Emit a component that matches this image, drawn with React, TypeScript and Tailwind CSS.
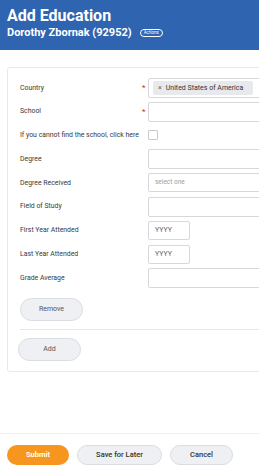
import React from "react";

const Label = ({ children }: { children: React.ReactNode }) => (
  <div className="w-[122px] shrink-0 whitespace-nowrap text-[6.9px] text-[#3a3a3a]">{children}</div>
);

const Star = ({ on }: { on?: boolean }) => (
  <div className="w-[6px] shrink-0 text-[8px] leading-none text-[#e02020]">{on ? "*" : ""}</div>
);

const Row = ({ children }: { children: React.ReactNode }) => (
  <div className="flex h-[23.75px] items-center">{children}</div>
);

const Field = ({ children, w, h }: { children?: React.ReactNode; w?: string; h?: string }) => (
  <div
    className={`${w ?? "flex-1"} ${h ?? "h-[20px]"} flex items-center rounded-[2px] border border-[#d6d8db] bg-white`}
  >
    {children}
  </div>
);

export default function App() {
  return (
    <div
      className="relative flex h-[473px] w-[259px] flex-col overflow-hidden bg-white"
      style={{ fontFamily: "Roboto, 'Liberation Sans', sans-serif" }}
    >
      <div className="h-[50px] bg-[#2f64b0] pl-[7px] pt-[6px] text-white">
        <div className="text-[16px] font-bold leading-[20px]">Add Education</div>
        <div className="flex items-center gap-[8px]">
          <div className="text-[11px] font-bold leading-[14px]">Dorothy Zbornak (92952)</div>
          <div className="flex h-[8px] items-center rounded-full border border-white px-[3px] text-[4.5px] leading-none">
            Actions
          </div>
        </div>
      </div>

      <div className="ml-[7px] mt-[17px] w-[270px] rounded-[3px] border border-[#e6e8eb] pb-[10px] pl-[12px] pt-[8px]">
        <Row>
          <Label>Country</Label>
          <Star on />
          <Field>
            <div className="ml-[4px] flex h-[14px] w-[100px] items-center rounded-[2px] bg-[#e7e9ec] pl-[5px] text-[7px] text-[#333]">
              <span className="mr-[4px] text-[7px] text-[#666]">×</span>United States of America
            </div>
          </Field>
        </Row>
        <Row>
          <Label>School</Label>
          <Star on />
          <Field />
        </Row>
        <Row>
          <Label>If you cannot find the school, click here</Label>
          <Star />
          <div className="h-[10px] w-[10px] rounded-[1px] border border-[#c7c9cc] bg-white" />
        </Row>
        <Row>
          <Label>Degree</Label>
          <Star />
          <Field />
        </Row>
        <Row>
          <Label>Degree Received</Label>
          <Star />
          <Field h="h-[19px]">
            <span className="pl-[6px] text-[6.5px] text-[#9a9da1]">select one</span>
          </Field>
        </Row>
        <Row>
          <Label>Field of Study</Label>
          <Star />
          <Field />
        </Row>
        <Row>
          <Label>First Year Attended</Label>
          <Star />
          <Field w="w-[42px]" h="h-[19px]">
            <span className="pl-[6px] text-[7px] text-[#666]">YYYY</span>
          </Field>
        </Row>
        <Row>
          <Label>Last Year Attended</Label>
          <Star />
          <Field w="w-[42px]" h="h-[19px]">
            <span className="pl-[6px] text-[7px] text-[#666]">YYYY</span>
          </Field>
        </Row>
        <Row>
          <Label>Grade Average</Label>
          <Star />
          <Field />
        </Row>

        <div className="mt-[8px] flex h-[23px] w-[63px] items-center justify-center rounded-full border border-[#dadde1] bg-[#eef0f3] text-[7px] text-[#555]">
          Remove
        </div>
        <div className="mt-[8px] h-px bg-[#e4e6e9]" />
        <div className="-ml-[2px] mt-[8px] flex h-[23px] w-[63px] items-center justify-center rounded-full border border-[#dadde1] bg-[#eef0f3] text-[7px] text-[#555]">
          Add
        </div>
      </div>

      <div className="flex-1" />

      <div className="flex h-[40px] items-start gap-[8px] border-t border-[#eef0f2] pl-[7px] pt-[11px]">
        <div className="flex h-[20px] w-[62px] items-center justify-center rounded-full bg-[#f7961f] text-[7.5px] font-bold text-white">
          Submit
        </div>
        <div className="flex h-[20px] w-[85px] items-center justify-center rounded-full border border-[#dadde1] bg-[#eef0f3] text-[7.5px] font-medium text-[#333]">
          Save for Later
        </div>
        <div className="flex h-[20px] w-[63px] items-center justify-center rounded-full border border-[#dadde1] bg-[#eef0f3] text-[7.5px] font-medium text-[#333]">
          Cancel
        </div>
      </div>
    </div>
  );
}
